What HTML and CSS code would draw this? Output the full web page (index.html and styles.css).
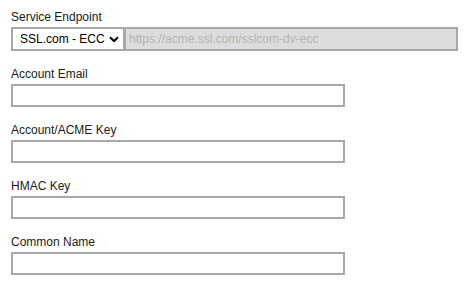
FILE: index.html
```html
<!DOCTYPE html>
<html>
<head>
<meta charset="utf-8">
<link rel="stylesheet" href="styles.css">
</head>
<body>
<form class="form">
  <div class="field">
    <label class="label">Service Endpoint</label>
    <div class="endpoint">
      <div class="select">
        <span class="select-text">SSL.com - ECC</span>
        <svg class="chev" width="10" height="7" viewBox="0 0 10 7"><path d="M1 1.2 L5 5 L9 1.2" fill="none" stroke="#000" stroke-width="2"/></svg>
      </div>
      <input class="input url" type="text" placeholder="https://acme.ssl.com/sslcom-dv-ecc" disabled>
    </div>
  </div>
  <div class="field">
    <label class="label">Account Email</label>
    <input class="input box" type="text">
  </div>
  <div class="field">
    <label class="label">Account/ACME Key</label>
    <input class="input box" type="text">
  </div>
  <div class="field">
    <label class="label">HMAC Key</label>
    <input class="input box" type="text">
  </div>
  <div class="field">
    <label class="label">Common Name</label>
    <input class="input box" type="text">
  </div>
</form>
</body>
</html>
```
FILE: styles.css
```css
html, body {
  margin: 0;
  padding: 0;
  background: #fff;
}
body {
  font-family: "Liberation Sans", Arial, sans-serif;
}
.form {
  padding: 10px 0 0 11px;
  display: flex;
  flex-direction: column;
  gap: 16px;
}
.field {
  display: flex;
  flex-direction: column;
  gap: 2px;
}
.label {
  font-size: 12px;
  line-height: 15px;
  color: #1a1a1a;
}
.endpoint {
  display: flex;
  width: 447px;
}
.select {
  box-sizing: border-box;
  height: 24px;
  width: 114px;
  border: 2px solid #a8a8a8;
  background: #fff;
  display: flex;
  align-items: center;
  justify-content: space-between;
  padding: 0 4px 0 7px;
  font-size: 12px;
  color: #000;
}
.input {
  box-sizing: border-box;
  height: 23px;
  border: 2px solid #a8a8a8;
  margin: 0;
  padding: 0 3px;
  font-family: "Liberation Sans", Arial, sans-serif;
  font-size: 12px;
  outline: none;
}
.url {
  flex: 1;
  height: 24px;
  background: #dcdcdc;
  border-left-width: 1px;
}
.url::placeholder {
  color: #b4b4b4;
}
.box {
  width: 334px;
  background: #fff;
}
```
